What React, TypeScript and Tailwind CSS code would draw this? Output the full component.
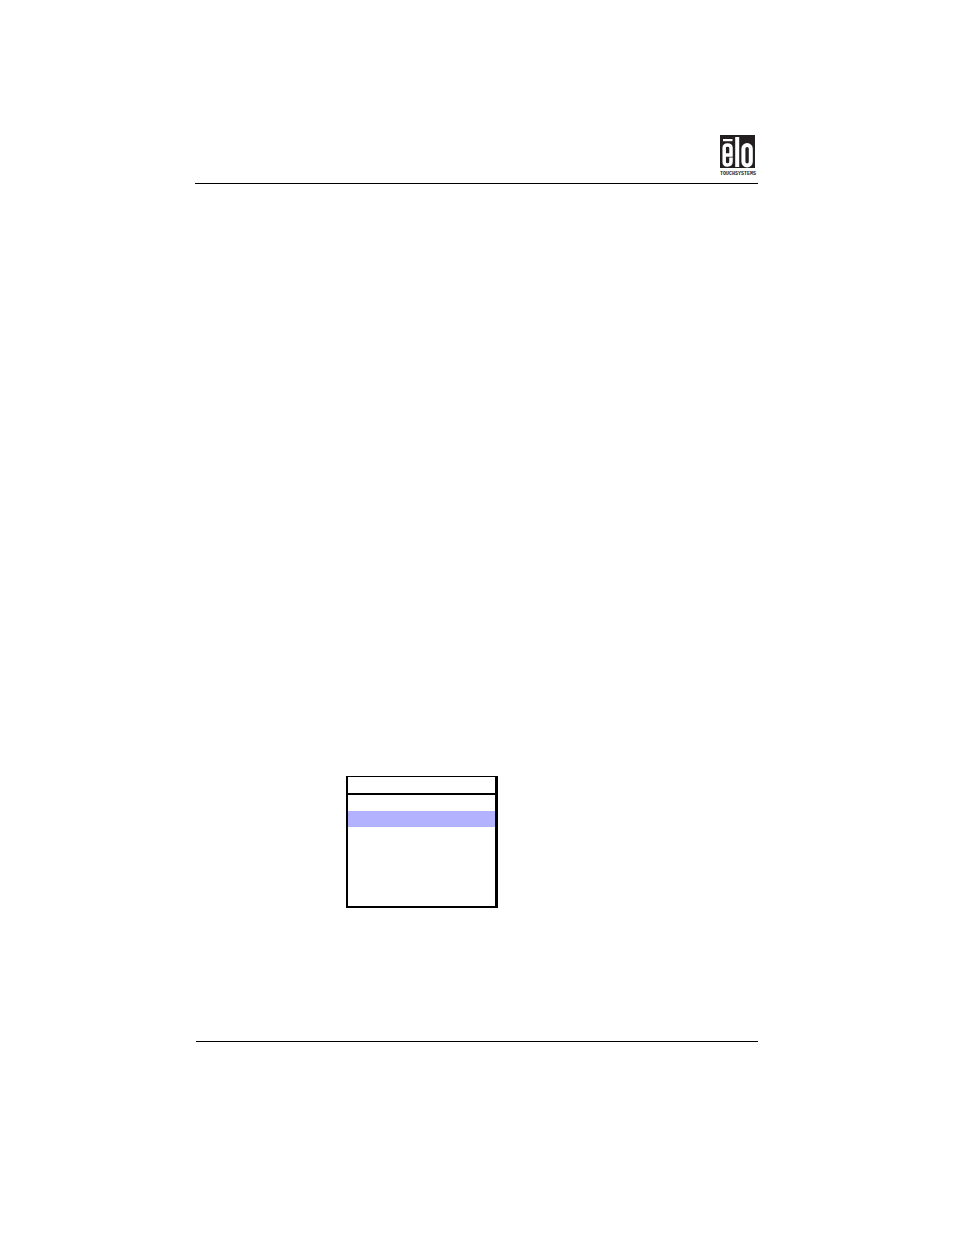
function Logo() {
  return (
    <div className="w-[36px] flex flex-col items-start">
      <svg viewBox="0 0 35 33" className="w-[35px] h-[33px]" role="img" aria-label="elo">
        <rect width="35" height="33" fill="#231f20" />
        <g fill="none" stroke="#fff">
          <rect x="3" y="4" width="9.5" height="2.2" fill="#fff" stroke="none" />
          <path d="M5 20H11V13Q11 10 7.5 10T4.2 13V27Q4.2 30 7.5 30T11 27V22.5" strokeWidth="3.5" />
          <path d="M17.2 2V32" strokeWidth="4" />
          <rect x="23.4" y="10" width="7.4" height="20.5" rx="3.7" strokeWidth="4" />
        </g>
      </svg>
      <span className="mt-1 text-[5px] leading-[5px] font-bold text-[#231f20] font-['Liberation_Mono',monospace]">
        TOUCHSYSTEMS
      </span>
    </div>
  );
}

const rows = [
  { id: 'first', className: 'bg-white' },
  { id: 'selected', className: 'bg-[#b2b2ff]' },
  { id: 'third', className: 'bg-white' },
  { id: 'fourth', className: 'bg-white' },
  { id: 'fifth', className: 'bg-white' },
  { id: 'sixth', className: 'bg-white' },
];

export default function App() {
  return (
    <div className="min-h-screen bg-white pl-[195px] pr-[196px] pt-[135px] pb-48">
      <header className="flex justify-end border-b border-black pr-[2px] pb-[6px]">
        <Logo />
      </header>

      <main className="pt-[592px] pb-[133px] pl-[151px]">
        {/* Menu panel */}
        <div className="w-[152px] pb-[15px] border-t border-l-2 border-r-3 border-b-2 border-black">
          <div className="h-[18px] border-b-2 border-black" />
          {rows.map((row) => (
            <div key={row.id} className={`h-4 ${row.className}`} />
          ))}
        </div>
      </main>

      <footer className="ml-px border-t border-black" />
    </div>
  );
}
